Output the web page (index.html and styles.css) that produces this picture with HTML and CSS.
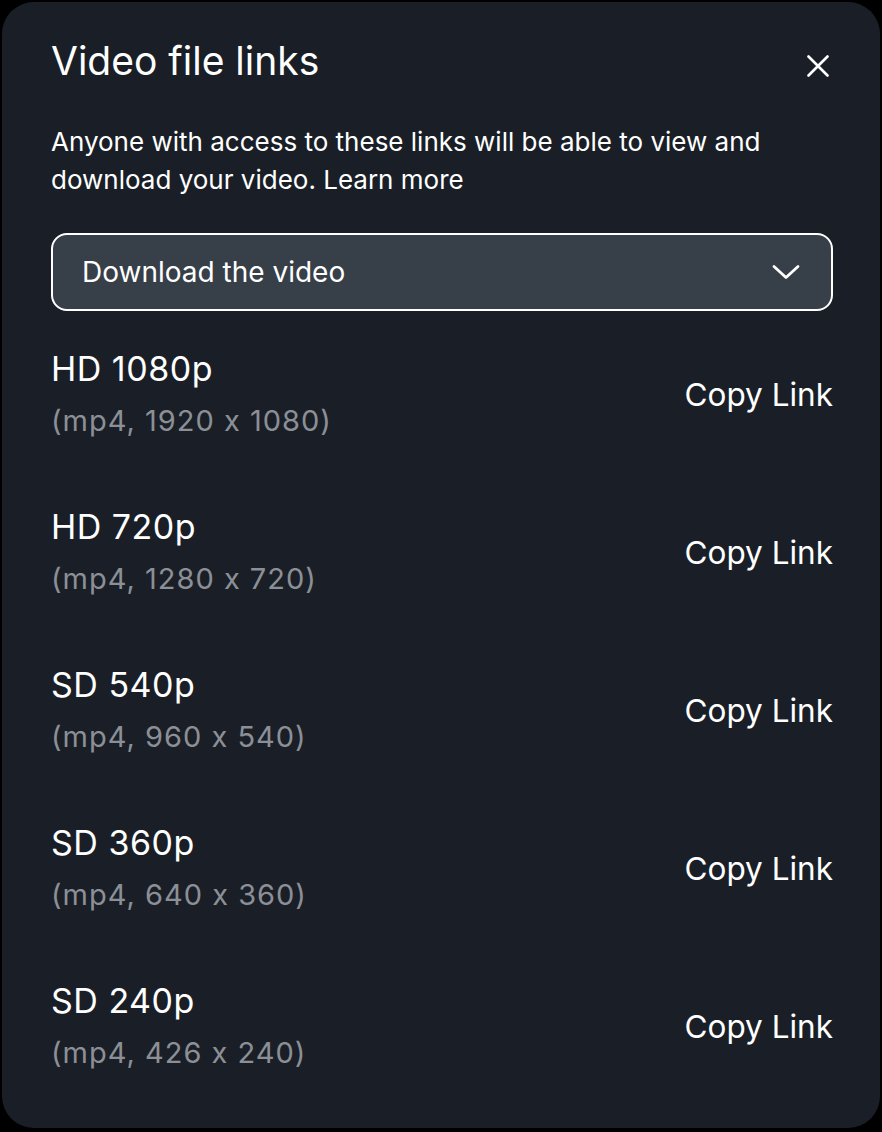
FILE: index.html
```html
<!DOCTYPE html>
<html>
<head>
<meta charset="utf-8">
<link rel="stylesheet" href="styles.css">
</head>
<body>
<div class="modal">
  <div class="header">
    <h1 class="title">Video file links</h1>
    <button class="close" aria-label="Close">
      <svg width="22" height="22" viewBox="0 0 22 22"><path d="M1.5 1.5L20.5 20.5M20.5 1.5L1.5 20.5" stroke="#fff" stroke-width="2.6" stroke-linecap="round" fill="none"/></svg>
    </button>
  </div>
  <p class="desc">Anyone with access to these links will be able to view and download your video. Learn more</p>
  <div class="select">
    <span>Download the video</span>
    <svg width="28" height="16" viewBox="0 0 28 16"><path d="M2 2.5L14 13.5L26 2.5" stroke="#fff" stroke-width="2.8" stroke-linecap="round" stroke-linejoin="round" fill="none"/></svg>
  </div>
  <div class="list">
    <div class="row"><div class="info"><div class="name">HD 1080p</div><div class="meta">(mp4, 1920 x 1080)</div></div><div class="copy">Copy Link</div></div>
    <div class="row"><div class="info"><div class="name">HD 720p</div><div class="meta">(mp4, 1280 x 720)</div></div><div class="copy">Copy Link</div></div>
    <div class="row"><div class="info"><div class="name">SD 540p</div><div class="meta">(mp4, 960 x 540)</div></div><div class="copy">Copy Link</div></div>
    <div class="row"><div class="info"><div class="name">SD 360p</div><div class="meta">(mp4, 640 x 360)</div></div><div class="copy">Copy Link</div></div>
    <div class="row"><div class="info"><div class="name">SD 240p</div><div class="meta">(mp4, 426 x 240)</div></div><div class="copy">Copy Link</div></div>
  </div>
</div>
</body>
</html>
```
FILE: styles.css
```css
* { box-sizing: border-box; }
html, body { margin: 0; padding: 0; background: #000; }
body {
  padding: 2px 2px 4px 2px;
  height: 1132px;
  font-family: Inter, "Noto Sans", sans-serif;
  font-feature-settings: "calt" 0;
  color: #fff;
}
.modal {
  background: #1a1f27;
  border-radius: 32px;
  height: 100%;
  padding: 35px 47px 0 49px;
}
.header { display: flex; justify-content: space-between; align-items: flex-start; }
.title { margin: 0; font-size: 39px; line-height: 48px; font-weight: 400; }
.close {
  background: none; border: 0; padding: 0;
  width: 22px; height: 22px;
  margin: 18px 4px 0 0;
  cursor: pointer;
}
.close svg { display: block; }
.desc { margin: 37.5px 0 0; font-size: 26px; line-height: 38px; }
.select {
  margin-top: 34.5px;
  height: 78px;
  border: 2.5px solid #fff;
  border-radius: 16px;
  background: #373f48;
  display: flex;
  align-items: center;
  justify-content: space-between;
  padding: 0 31px 0 29px;
  font-size: 28px;
}
.select svg { display: block; }
.list { margin-top: 27px; display: flex; flex-direction: column; gap: 51px; }
.row { display: flex; justify-content: space-between; align-items: center; }
.info { display: flex; flex-direction: column; }
.name { font-size: 34px; line-height: 55px; padding-top: 3px; letter-spacing: 0.5px; }
.meta { font-size: 29px; line-height: 49px; letter-spacing: 1px; color: #8c9096; }
.copy { font-size: 31.5px; line-height: 44px; margin-top: 7px; }
```
